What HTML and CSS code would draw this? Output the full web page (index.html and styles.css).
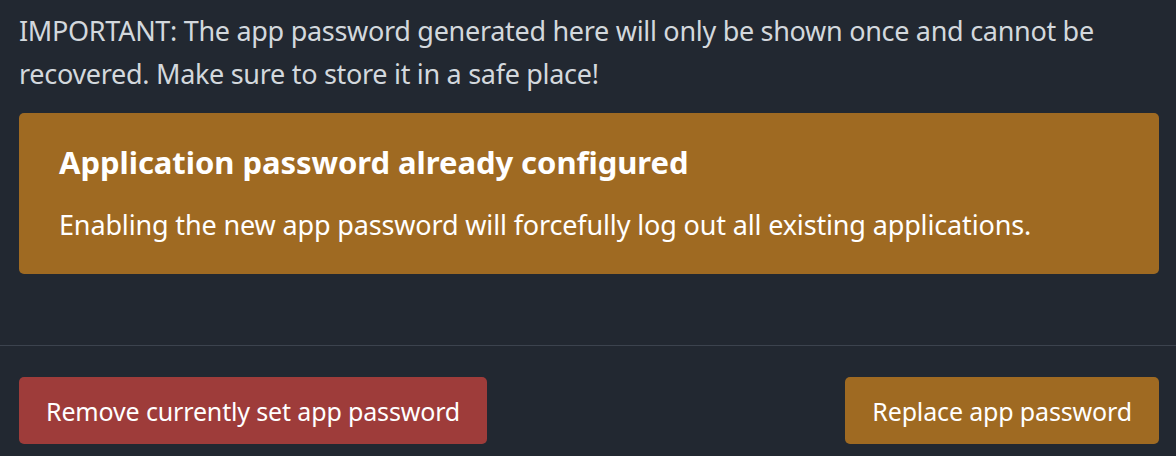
FILE: index.html
```html
<!DOCTYPE html>
<html lang="en">
<head>
    <meta charset="UTF-8">
    <meta name="viewport" content="width=device-width, initial-scale=1.0">
    <title>App password</title>
    <link rel="stylesheet" href="styles.css">
</head>
<body>
    <div class="modal-body">
        <p class="note">IMPORTANT: The app password generated here will only be shown once and cannot be recovered. Make sure to store it in a safe place!</p>
        <div class="alert">
            <h4>Application password already configured</h4>
            <p>Enabling the new app password will forcefully log out all existing applications.</p>
        </div>
    </div>
    <div class="modal-footer">
        <button type="button" class="btn btn-danger">Remove currently set app password</button>
        <button type="button" class="btn btn-warning">Replace app password</button>
    </div>
</body>
</html>
```

FILE: styles.css
```css
html, body {
    margin: 0;
    padding: 0;
    height: 100%;
    overflow: hidden;
    background-color: #222831;
    font-family: "Noto Sans", sans-serif;
}
.modal-body {
    padding: 9px 17px 0 19px;
    height: 336px;
    box-sizing: border-box;
}
.note {
    margin: 0 0 18px 0;
    color: #d3d8dd;
    font-size: 27px;
    line-height: 43px;
    letter-spacing: -0.3px;
}
.alert {
    background-color: #9f6a22;
    border-radius: 5px;
    padding: 28px 40px;
    color: #ffffff;
}
.alert h4 {
    margin: 0 0 20px 0;
    font-size: 31px;
    line-height: 42px;
    font-weight: 700;
    letter-spacing: -0.05px;
}
.alert p {
    margin: 0;
    font-size: 27px;
    line-height: 43px;
    letter-spacing: -0.15px;
}
.modal-footer {
    border-top: 1px solid #3c434e;
    margin-top: 9px;
    padding: 31px 17px 0 19px;
    display: flex;
    justify-content: space-between;
}
.btn {
    height: 67px;
    padding: 0 27px;
    border: none;
    border-radius: 5px;
    color: #ffffff;
    font-family: "Noto Sans", sans-serif;
    font-size: 25px;
    letter-spacing: -0.15px;
    cursor: pointer;
}
.btn-danger {
    background-color: #9e3c3a;
}
.btn-warning {
    background-color: #9f6a22;
}
```
